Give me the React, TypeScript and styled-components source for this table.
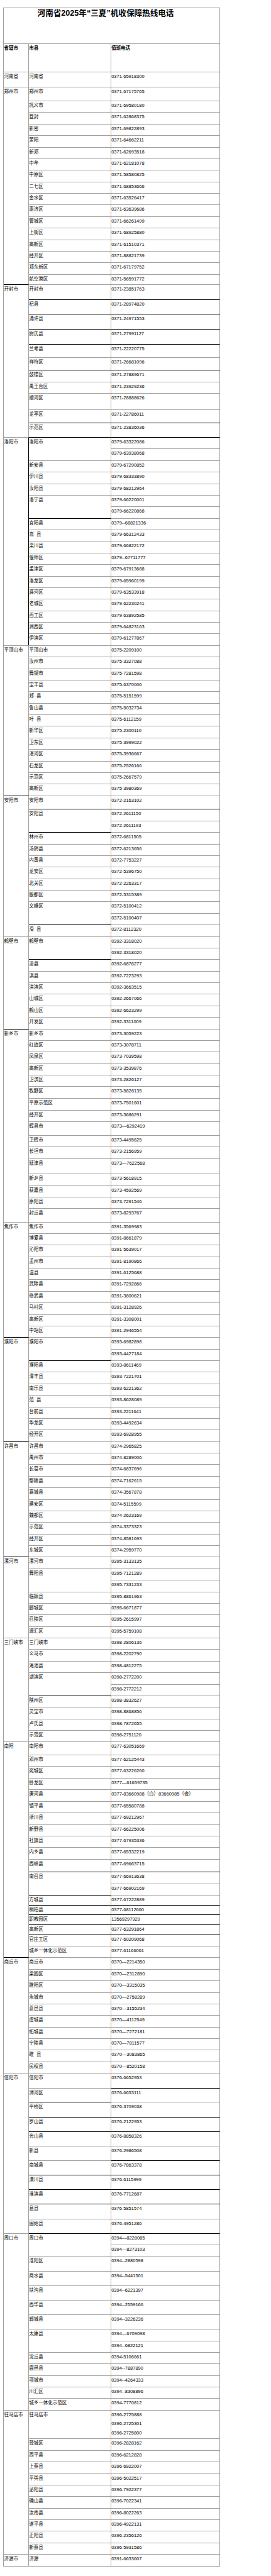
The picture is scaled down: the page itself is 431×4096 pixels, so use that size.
import type { ReactElement } from 'react';
import styled, { createGlobalStyle } from 'styled-components';

// reference was measured at full size; everything is drawn at this scale
const S = 0.681;
const px = (n: number) => `${(n * S).toFixed(2)}px`;

type Flag = 'b' | '2' | '3'; // dark top line: both cells, name cell only, phone cell only
type Entry = [string, string | string[], (number | number[])?, Flag?];
type Group = { city: string; dark?: boolean; side?: boolean; entries: Entry[] };

const groups: Group[] = [
    { city: '河南省', entries: [['河南省', '0371-65918300', 36]] },
    {
        city: '郑州市',
        entries: [
            ['郑州市', '0371-67175765', 32],
            ['巩义市', '0371-69580180'],
            ['登封', '0371-62868375'],
            ['新密', '0371-69822893'],
            ['荥阳', '0371-64662211'],
            ['新郑', '0371-62693518'],
            ['中牟', '0371-62181078'],
            ['中原区', '0371-58580825'],
            ['二七区', '0371-68853666'],
            ['金水区', '0371-63526417'],
            ['惠济区', '0371-63639686'],
            ['管城区', '0371-66261499'],
            ['上街区', '0371-68925880'],
            ['高新区', '0371-61510371'],
            ['经开区', '0371-88821739'],
            ['郑东新区', '0371-67179752'],
            ['航空港区', '0371-56591772', 24],
        ],
    },
    {
        city: '开封市',
        dark: true,
        entries: [
            ['开封市', '0371-23851763', 35],
            ['杞县', '0371-28974820', 34, 'b'],
            ['通许县', '0371-24971553', 35, 'b'],
            ['尉氏县', '0371-27991127', 35, 'b'],
            ['兰考县', '0371-22220775', 31, 'b'],
            ['祥符区', '0371-26681096', 30],
            ['鼓楼区', '0371-27889671', 27, 'b'],
            ['禹王台区', '0371-23929236'],
            ['顺河区', '0371-28888626', 38],
            ['龙亭区', '0371-22786011', 31],
            ['示范区', '0371-23836036', 34, 'b'],
        ],
    },
    {
        city: '洛阳市',
        side: true,
        entries: [
            ['洛阳市', ['0379-63322086', '0379-63938068'], [27, 27], 'b'],
            ['新安县', '0379-67290852'],
            ['伊川县', '0379-68333890'],
            ['汝阳县', '0379-68212964'],
            ['洛宁县', ['0379-66220001', '0379-66220868']],
            ['宜阳县', '0379--68821336', 27, '2'],
            ['嵩\u00a0\u00a0县', '0379-66312433'],
            ['栾川县', '0379-66822172'],
            ['偃师区', '0379--67711777'],
            ['孟津区', '0379-67913688'],
            ['洛龙区', '0379-65960199'],
            ['瀍河区', '0379-63533918'],
            ['老城区', '0379-62230241'],
            ['西工区', '0379-63892585'],
            ['涧西区', '0379-64823163'],
            ['伊滨区', '0379-61277867'],
        ],
    },
    {
        city: '平顶山市',
        entries: [
            ['平顶山市', '0375-2209100'],
            ['汝州市', '0375-3327088'],
            ['舞钢市', '0375-7281598'],
            ['宝丰县', '0375-6370006'],
            ['郏\u00a0\u00a0县', '0375-5151599'],
            ['鲁山县', '0375-5032734'],
            ['叶\u00a0\u00a0县', '0375-6112159'],
            ['新华区', '0375-2300110'],
            ['卫东区', '0375-3999022'],
            ['湛河区', '0375-3936667'],
            ['石龙区', '0375-2526166'],
            ['示范区', '0375-2667579'],
            ['高新区', '0375-3980369'],
        ],
    },
    {
        city: '安阳市',
        dark: true,
        entries: [
            ['安阳市', '0372-2163102', 32],
            ['安阳县', ['0372-2611150', '0372-2611193'], [27, 27], 'b'],
            ['林州市', '0372-6811505', 27, '2'],
            ['汤阴县', '0372-6213656'],
            ['内黄县', '0372-7753227'],
            ['龙安区', '0372-5396750'],
            ['北关区', '0372-2263317'],
            ['殷都区', '0372-5315389'],
            ['文峰区', ['0372-5100412', '0372-5100407']],
            ['滑\u00a0\u00a0县', '0372-8112320', 27, '2'],
        ],
    },
    {
        city: '鹤壁市',
        entries: [
            ['鹤壁市', ['0392-3318020', '0392-3318020']],
            ['浚县', '0392-6876277', 27, '2'],
            ['淇县', '0392-7223293'],
            ['淇滨区', '0392-3663515'],
            ['山城区', '0392-2667066'],
            ['鹤山区', '0392-6623299'],
            ['开发区', '0392-3311009'],
        ],
    },
    {
        city: '新乡市',
        dark: true,
        entries: [
            ['新乡市', '0373-3059223'],
            ['红旗区', '0373-3078711'],
            ['凤泉区', '0373-7039598'],
            ['高新区', '0373-3539876'],
            ['卫滨区', '0373-2826127'],
            ['牧野区', '0373-5828135'],
            ['平原示范区', '0373-7501601', 28],
            ['经开区', '0373-3686291'],
            ['辉县市', '0373—6292419', 32],
            ['卫辉市', '0373-4495625'],
            ['长垣市', '0373-2156959'],
            ['延津县', '0373—7622568', 36],
            ['新乡县', '0373-5618915'],
            ['获嘉县', '0373-4592569'],
            ['原阳县', '0373-7291546'],
            ['封丘县', '0373-8293767', 31],
        ],
    },
    {
        city: '焦作市',
        entries: [
            ['焦作市', '0391-3569983'],
            ['博爱县', '0391-8661879'],
            ['沁阳市', '0391-5639017'],
            ['孟州市', '0391-8190866'],
            ['温县', '0391-6125688'],
            ['武陟县', '0391-7292866'],
            ['修武县', '0391-3800621'],
            ['马村区', '0391-3128926'],
            ['高新区', '0391-3308001'],
            ['中站区', '0391-2946554'],
        ],
    },
    {
        city: '濮阳市',
        dark: true,
        entries: [
            ['濮阳市', ['0393-6982898', '0393-4427184']],
            ['濮阳县', '0393-8611469', 27, '2'],
            ['清丰县', '0393-7221701'],
            ['南乐县', '0393-6221362'],
            ['范\u00a0\u00a0县', '0393-8628089'],
            ['台前县', '0393-2211641'],
            ['华龙区', '0393-4492634'],
            ['经开区', '0393-6928955'],
        ],
    },
    {
        city: '许昌市',
        dark: true,
        entries: [
            ['许昌市', '0374-2965825'],
            ['禹州市', '0374-8289006'],
            ['长葛市', '0374-6837696'],
            ['鄢陵县', '0374-7162615'],
            ['襄城县', '0374-3567878'],
            ['建安区', '0374-5115599'],
            ['魏都区', '0374-2623169'],
            ['示范区', '0374-3373323'],
            ['经开区', '0374-8581693'],
            ['东城区', '0374-2959770'],
        ],
    },
    {
        city: '漯河市',
        dark: true,
        entries: [
            ['漯河市', '0395-3133135'],
            ['舞阳县', ['0395-7121289', '0395-7331233']],
            ['临颍县', '0395-8861963'],
            ['郾城区', '0395-6671877'],
            ['召陵区', '0395-2615997'],
            ['源汇区', '0395-5759108'],
        ],
    },
    {
        city: '三门峡市',
        entries: [
            ['三门峡市', '0398-2806136'],
            ['义马市', '0398-2202790'],
            ['渑池县', '0398-4812275'],
            ['湖滨区', ['0398-2772200', '0398-2772212']],
            ['陕州区', '0398-3832627', 27, '2'],
            ['灵宝市', '0398-8868856'],
            ['卢氏县', '0398-7872655'],
            ['示范区', '0398-2751120'],
        ],
    },
    {
        city: '南阳',
        entries: [
            ['南阳市', '0377-63051669', 30],
            ['邓州市', '0377-62125443'],
            ['宛城区', '0377-63226260'],
            ['卧龙区', '0377—61659735'],
            ['唐河县', '0377-83660988（白）83660985（夜）', 28],
            ['镇平县', '0377-65580788'],
            ['淅川县', '0377-69212967'],
            ['新野县', '0377-66225006'],
            ['社旗县', '0377-67935336'],
            ['内乡县', '0377-65332219'],
            ['西峡县', '0377-69663715', 30],
            ['南召县', ['0377-66913638', '0377-66902169'], [27, 27], 'b'],
            ['方城县', '0377-67222889', 23, '2'],
            ['桐柏县', '0377-68112660', 23, 'b'],
            ['职教园区', '13569297929', 23, 'b'],
            ['高新区', '0377-63291864', 23, 'b'],
            ['官庄工区', '0377-60209068', 27, 'b'],
            ['城乡一体化示范区', '0377-61166061'],
        ],
    },
    {
        city: '商丘市',
        dark: true,
        entries: [
            ['商丘市', '0370—2214350'],
            ['梁园区', '0370—2312890'],
            ['睢阳区', '0370—3315035'],
            ['永城市', '0370—2758289'],
            ['夏邑县', '0370—3155234'],
            ['虞城县', '0370—4112549'],
            ['柘城县', '0370—7272181'],
            ['宁陵县', '0370—7811577'],
            ['睢\u00a0\u00a0县', '0370—3083865'],
            ['民权县', '0370—8520158'],
        ],
    },
    {
        city: '信阳市',
        entries: [
            ['信阳市', '0376-6652953', 35],
            ['浉河区', '0376-6653111', 33, '3'],
            ['平桥区', '0376-3709038', 34, '2'],
            ['罗山县', '0376-2122953', 34, 'b'],
            ['光山县', '0376-8858326', 34, 'b'],
            ['新县', '0376-2986508', 34],
            ['商城县', '0376-7863378', 34, '3'],
            ['潢川县', '0376-6115999', 34, 'b'],
            ['淮滨县', '0376-7712687', 34, 'b'],
            ['息县', '0376-5851574', 34, 'b'],
            ['固始县', '0376-4951286', 34],
        ],
    },
    {
        city: '周口市',
        entries: [
            ['周口市', ['0394—8228085', '0394—8273103'], [27, 27], 'b'],
            ['淮阳区', '0394--2880598', 34],
            ['商水县', '0394--5441501', 34],
            ['扶沟县', '0394--6221397', 34],
            ['西华县', '0394--2559166', 34],
            ['郸城县', '0394--3226236', 34],
            ['太康县', ['0394—6709098', '0394--6822121']],
            ['沈丘县', '0394-5106661'],
            ['鹿邑县', '0394--7887890'],
            ['项城市', '0394--4264333'],
            ['川汇区', '0394--8308896'],
            ['城乡一体化示范区', '0394-7770812'],
        ],
    },
    {
        city: '驻马店市',
        entries: [
            ['驻马店市', '0396-2725888\n0396-2725301\n0396-2725800', 67],
            ['驿城区', '0396-2828162'],
            ['西平县', '0396-6212828'],
            ['上蔡县', '0396-6922007'],
            ['平舆县', '0396-5022517'],
            ['泌阳县', '0396-7922377'],
            ['确山县', '0396-7022341'],
            ['汝南县', '0396-8022263'],
            ['遂平县', '0396-4922131'],
            ['正阳县', '0396-2356126'],
            ['新蔡县', '0396-5931586'],
        ],
    },
    { city: '济源市', entries: [['济源', '0391-6633607']] },
];

const GlobalStyle = createGlobalStyle`
    html, body {
        margin: 0;
        padding: 0;
        background: #ffffff;
    }
`;

const Page = styled.div`
    padding: ${px(17)} 0 ${px(15)} ${px(8)};
    font-family: "Liberation Sans", "Noto Sans CJK SC", sans-serif;
    color: #000000;
`;

const Sheet = styled.table`
    table-layout: fixed;
    width: ${px(504)};
    border-collapse: separate;
    border-spacing: 0;
    border-left: 1px solid #a0a0a0;
    border-bottom: 1px solid #a0a0a0;
`;

const Row = styled.tr<{ $h: number }>`
    height: ${p => px(p.$h)};
`;

const Cell = styled.td<{ $dark?: boolean }>`
    box-sizing: border-box;
    padding: 0;
    vertical-align: top;
    text-align: left;
    border-top: 1px solid ${p => (p.$dark ? '#000000' : '#a0a0a0')};
    border-right: 1px solid #a0a0a0;
    font-size: ${px(11)};
    line-height: 14.5px;
    white-space: pre-wrap;
`;

const TitleCell = styled(Cell)`
    text-align: center;
    padding-right: ${px(28)};
    font-size: 12.6px;
    font-weight: bold;
    line-height: 17px;
`;

const HeadCell = styled(Cell)`
    font-weight: bold;
`;

const CityCell = styled(Cell)<{ $side?: boolean }>`
    border-right-color: ${p => (p.$side ? '#000000' : '#a0a0a0')};
`;

const NameCell = styled(Cell)``;

const PhoneCell = styled(Cell)``;

const renderGroup = (g: Group, gi: number) => {
    const rowCount = g.entries.reduce(
        (n, e) => n + (Array.isArray(e[1]) ? e[1].length : 1),
        0
    );
    const rows: ReactElement[] = [];
    g.entries.forEach(([name, phone, h, flag], ei) => {
        const phones = Array.isArray(phone) ? phone : [phone];
        const hs = Array.isArray(h) ? h : phones.map(() => h ?? 27);
        phones.forEach((p, pi) => {
            rows.push(
                <Row key={`${gi}-${ei}-${pi}`} $h={hs[pi]}>
                    {ei === 0 && pi === 0 && (
                        <CityCell rowSpan={rowCount} $dark={g.dark} $side={g.side}>
                            {g.city}
                        </CityCell>
                    )}
                    {pi === 0 && (
                        <NameCell rowSpan={phones.length} $dark={flag === 'b' || flag === '2'}>
                            {name}
                        </NameCell>
                    )}
                    <PhoneCell $dark={pi === 0 && (flag === 'b' || flag === '3')}>{p}</PhoneCell>
                </Row>
            );
        });
    });
    return rows;
};

export default function App() {
    return (
        <Page>
            <GlobalStyle />
            <Sheet>
                <colgroup>
                    <col style={{ width: px(58.5) }} />
                    <col style={{ width: px(192.2) }} />
                    <col style={{ width: px(253.3) }} />
                </colgroup>
                <tbody>
                    <Row $h={85}>
                        <TitleCell colSpan={3}>河南省2025年“三夏”机收保障热线电话</TitleCell>
                    </Row>
                    <Row $h={65}>
                        <HeadCell>省辖市</HeadCell>
                        <HeadCell>市县</HeadCell>
                        <HeadCell>值班电话</HeadCell>
                    </Row>
                    {groups.flatMap(renderGroup)}
                </tbody>
            </Sheet>
        </Page>
    );
}
